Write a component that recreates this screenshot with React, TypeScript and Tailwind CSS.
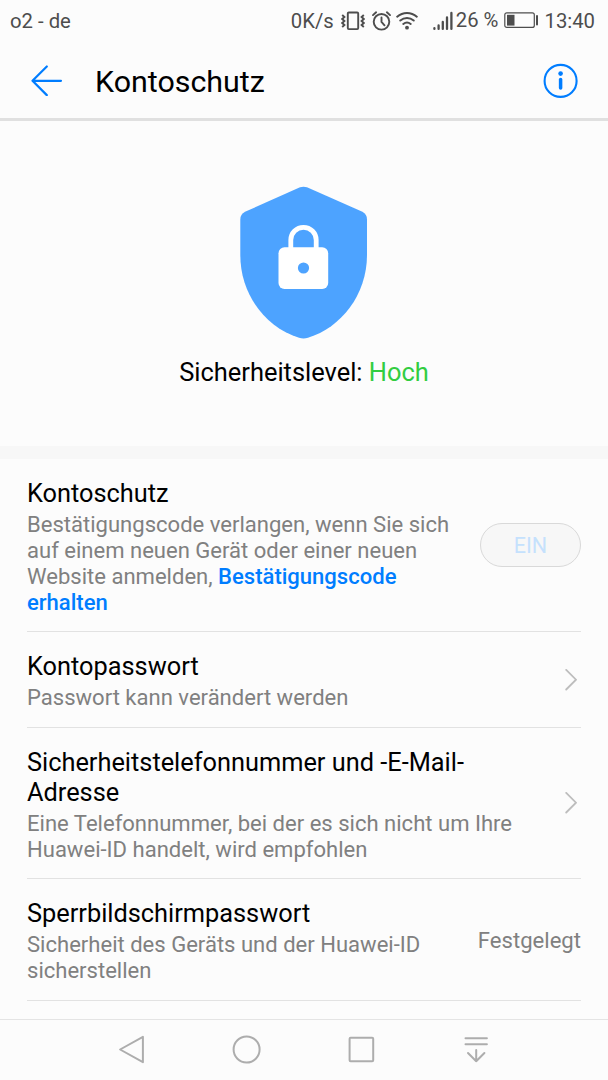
import type { ReactNode } from 'react';

interface SettingRow {
  id: string;
  title: string;
  description: ReactNode;
  height: string;
  textClass: string;
  trailing: ReactNode;
}

function ChevronIcon() {
  return (
    <svg className="mr-1 h-[22px] w-3" viewBox="0 0 12 22" fill="none" stroke="#bdbdbd" strokeWidth="1.8" strokeLinecap="round">
      <path d="M1.2.9 11 10.7 1.2 20.5" />
    </svg>
  );
}

const rows: SettingRow[] = [
  {
    id: 'protection',
    title: 'Kontoschutz',
    description: (
      <>
        Bestätigungscode verlangen, wenn Sie sich auf einem neuen Gerät oder einer neuen Website anmelden,{' '}
        <span className="font-medium text-[#007dff]">Bestätigungscode erhalten</span>
      </>
    ),
    height: 'h-[173px]',
    textClass: 'w-[436px]',
    trailing: (
      <button className="flex h-11 w-[101px] items-center justify-center rounded-full border border-[#d9d9d9] bg-[#f7f7f7] pt-0.5 text-[21.5px] text-[#c5e1fd]">
        EIN
      </button>
    ),
  },
  {
    id: 'password',
    title: 'Kontopasswort',
    description: 'Passwort kann verändert werden',
    height: 'h-[96px]',
    textClass: 'w-[500px]',
    trailing: <ChevronIcon />,
  },
  {
    id: 'contact',
    title: 'Sicherheitstelefonnummer und -E-Mail-Adresse',
    description: 'Eine Telefonnummer, bei der es sich nicht um Ihre Huawei-ID handelt, wird empfohlen',
    height: 'h-[151px]',
    textClass: 'w-[500px]',
    trailing: <ChevronIcon />,
  },
  {
    id: 'lockscreen',
    title: 'Sperrbildschirmpasswort',
    description: 'Sicherheit des Geräts und der Huawei-ID sicherstellen',
    height: 'h-[122px]',
    textClass: 'w-[430px] pb-px',
    trailing: <span className="pt-0.5 text-[22.1px] text-[#808080]">Festgelegt</span>,
  },
];

function StatusBar() {
  return (
    <div className="flex h-[42px] items-center pr-[13px] pl-[10px] text-[20.3px] text-[#4d4d4d]">
      <span className="flex-1">o2 - de</span>
      <span>0K/s</span>
      <svg className="ml-[7px] h-5 w-6" viewBox="0 0 24 20" fill="none" stroke="#4d4d4d" strokeWidth="1.9">
        <rect x="6.8" y="1.5" width="10.4" height="16.6" rx="1" />
        <path d="M1.2 4l2.2 2-2.2 2 2.2 2-2.2 2 2.2 2-2.2 2M22.8 4l-2.2 2 2.2 2-2.2 2 2.2 2-2.2 2 2.2 2" />
      </svg>
      <svg className="ml-[7px] h-5 w-[19px]" viewBox="0 0 19 20" fill="none" stroke="#4d4d4d" strokeWidth="1.9" strokeLinecap="round">
        <circle cx="9.5" cy="10.8" r="7.8" />
        <path d="M9.5 6.5V11l3 3.3M1 4.1 4.1 1.3M18 4.1l-3.1-2.8" />
      </svg>
      <svg className="ml-[5px] h-5 w-[22px]" viewBox="0 0 22 20" fill="none" stroke="#4d4d4d" strokeWidth="2" strokeLinecap="round">
        <path d="M1.2 5.7c5.7-5 13.9-5 19.6 0M4.3 9.5c4-3.4 9.4-3.4 13.4 0M7.3 13c2.3-1.8 5.1-1.8 7.4 0" />
        <circle cx="11" cy="16.7" r="1.9" fill="#4d4d4d" stroke="none" />
      </svg>
      <svg className="ml-[15px] h-5 w-5" viewBox="0 0 20 20" fill="none" stroke="#4d4d4d" strokeWidth="2.3" strokeLinecap="round">
        <path d="M1.4 17.9v-.7M5.6 17.9v-3.5M9.8 17.9v-7M14 17.9V6.5M18.4 17.9V2" />
      </svg>
      <span className="ml-[3px] pb-0.5">26 %</span>
      <svg className="ml-1.5 h-5 w-[35px]" viewBox="0 0 35 20">
        <rect x=".8" y="1.8" width="29.5" height="14.6" rx="2" fill="none" stroke="#4d4d4d" strokeWidth="1.2" />
        <path fill="#4d4d4d" d="M3 3.8h7.5v10.8H3z" />
        <path stroke="#4d4d4d" strokeWidth="2" strokeLinecap="round" d="M33 5v8.4" />
      </svg>
      <span className="ml-[5px]">13:40</span>
    </div>
  );
}

function Header() {
  return (
    <header className="mb-px flex h-[79px] items-center border-b-[3px] border-[#e0e0e0] pr-[30px] pl-[31px]">
      <svg className="h-8 w-8" viewBox="0 0 32 32" fill="none" stroke="#007dff" strokeWidth="2.2" strokeLinecap="round" strokeLinejoin="round">
        <path d="M30 16.8H1.5M15.8 2.5 1.5 16.8l14.3 14.3" />
      </svg>
      <h1 className="ml-8 flex-1 pt-1 text-[30.4px] leading-9 text-black">Kontoschutz</h1>
      <svg className="h-9 w-9" viewBox="0 0 36 36">
        <circle cx="18.6" cy="18.9" r="16" fill="none" stroke="#007dff" strokeWidth="2.1" />
        <circle cx="18.6" cy="11.6" r="2.3" fill="#007dff" />
        <path d="M18.6 17.6v8.3" stroke="#007dff" strokeWidth="3.5" strokeLinecap="round" />
      </svg>
    </header>
  );
}

function SecurityLevel() {
  return (
    <section className="flex h-[337px] flex-col items-center border-b-[13px] border-[#f7f7f7] pt-16">
      <svg className="h-[153px] w-32" viewBox="0 0 128 153">
        <path
          fill="#4da3ff"
          d="M60 1.3q3.5-1.3 7 0L122.4 25.8Q127 28.2 127 33.5V69C127 109 101 141.5 68 151.8q-4.5 1.3-9 0C26 141.5.3 109 .3 69V33.5Q.3 28.2 5 25.8z"
        />
        <path fill="none" stroke="#fff" strokeWidth="4.8" d="M50.8 64V54a12.7 12.7 0 0 1 25.4 0v10" />
        <rect x="38.5" y="61.2" width="49.7" height="41.8" rx="6" fill="#fff" />
        <circle cx="63.5" cy="82" r="5.6" fill="#4da3ff" />
      </svg>
      <p className="mt-[18px] text-[25.45px] leading-[30px] text-black">
        Sicherheitslevel: <span className="text-[#32cd41]">Hoch</span>
      </p>
    </section>
  );
}

function NavigationBar() {
  return (
    <nav className="flex h-[61px] shrink-0 items-center justify-center gap-[83px] border-t border-[#e4e4e4]">
      <svg className="h-8 w-8" viewBox="0 0 32 32" fill="none" stroke="#adadad" strokeWidth="2" strokeLinejoin="round">
        <path d="M26.9 2.8v25.4L4.1 15.5z" />
      </svg>
      <svg className="h-8 w-8" viewBox="0 0 32 32" fill="none" stroke="#adadad" strokeWidth="2">
        <circle cx="15.6" cy="15.5" r="13" />
      </svg>
      <svg className="h-8 w-8" viewBox="0 0 32 32" fill="none" stroke="#adadad" strokeWidth="2">
        <rect x="3.6" y="3.7" width="23.6" height="23.6" rx="1" />
      </svg>
      <svg className="h-8 w-8" viewBox="0 0 32 32" fill="none" stroke="#adadad" strokeWidth="2" strokeLinecap="round" strokeLinejoin="round">
        <path d="M4.5 4.2h21.4M4.5 10.2h21.4M15.2 16v11.3M7 19l8.2 8.3 8.2-8.3" />
      </svg>
    </nav>
  );
}

export default function App() {
  return (
    <div className="flex h-[1080px] w-[608px] flex-col overflow-hidden bg-[#fcfcfc] font-[Roboto,sans-serif]">
      <StatusBar />
      <Header />
      <SecurityLevel />
      <main className="flex-1 overflow-hidden px-[27px]">
        {rows.map((row) => (
          <div key={row.id} className={`flex items-center justify-between border-b border-[#e2e2e2] ${row.height}`}>
            <div className={`shrink-0 pt-[3px] ${row.textClass}`}>
              <h2 className="text-[25.35px] leading-[30px] text-black">{row.title}</h2>
              <p className="mt-1 text-[22.05px] leading-[26px] text-[#808080]">{row.description}</p>
            </div>
            {row.trailing}
          </div>
        ))}
      </main>
      <NavigationBar />
    </div>
  );
}
